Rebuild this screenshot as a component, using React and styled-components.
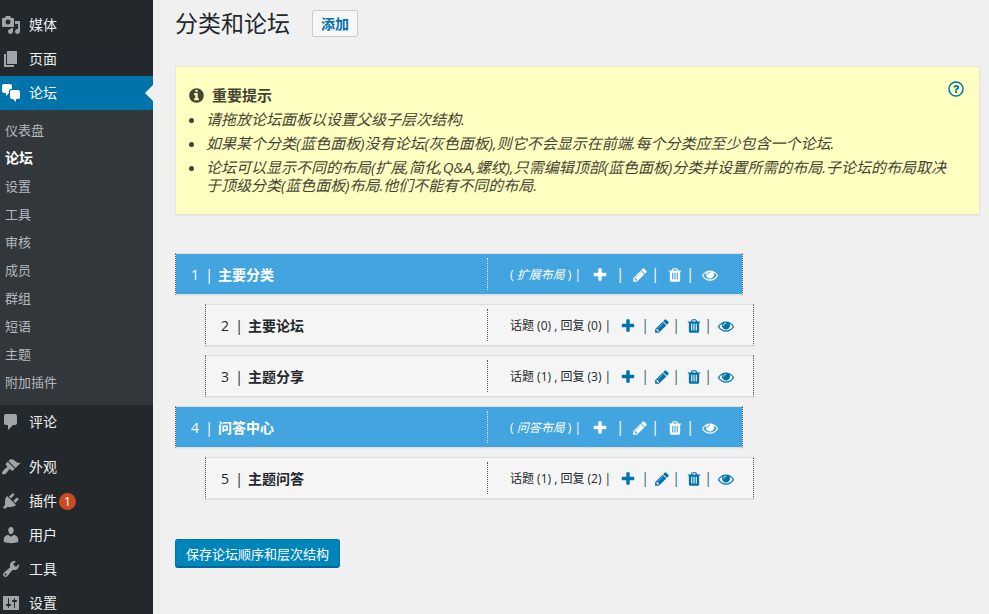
import React from "react";
import styled, { createGlobalStyle, css } from "styled-components";

const GlobalStyle = createGlobalStyle`
  * { box-sizing: border-box; }
  body {
    margin: 0;
    background: #f0f0f0;
    color: #23282d;
    font-family: "Open Sans", "Noto Sans CJK SC", sans-serif;
    font-size: 14px;
  }
  button { font-family: inherit; cursor: pointer; }
  h1, h2, ul, p { margin: 0; padding: 0; }
`;

/* ---------- icons ---------- */

const Svg = styled.svg`
  display: block;
  flex: none;
  width: ${(p) => p.$size}px;
  height: ${(p) => p.$size}px;
  fill: currentColor;
`;

const menuPaths = {
  media:
    "M13 11V4c0-.55-.45-1-1-1h-1.67L9 1H5L3.67 3H2c-.55 0-1 .45-1 1v7c0 .55.45 1 1 1h10c.55 0 1-.45 1-1zM7 4.5c1.38 0 2.5 1.12 2.5 2.5S8.38 9.5 7 9.5 4.5 8.38 4.5 7 5.62 4.5 7 4.5zM14 6h5v10.5c0 1.38-1.12 2.5-2.5 2.5S14 17.88 14 16.5s1.12-2.5 2.5-2.5c.17 0 .34.02.5.05V9h-3V6zm-4 8.05V13h2v3.5c0 1.38-1.12 2.5-2.5 2.5S7 17.88 7 16.5 8.12 14 9.5 14c.17 0 .34.02.5.05z",
  page: "M6 15V2h10v13H6zm-1 1h8v2H3V5h2v11z",
  chat: "M11 6h-.82C9.07 6 8 7.2 8 8.16V10l-3 3v-3H3c-1.1 0-2-.9-2-2V3c0-1.1.9-2 2-2h6c1.1 0 2 .9 2 2v3zm0 1h6c1.1 0 2 .9 2 2v5c0 1.1-.9 2-2 2h-2v3l-3-3h-1c-1.1 0-2-.9-2-2V9c0-1.1.9-2 2-2z",
  comment:
    "M5 2h9c1.1 0 2 .9 2 2v7c0 1.1-.9 2-2 2h-2l-5 5v-5H5c-1.1 0-2-.9-2-2V4c0-1.1.9-2 2-2z",
  appearance:
    "M14.48 11.06L7.41 3.99l1.5-1.5c.5-.56 2.3-.47 3.51.32 1.21.8 1.43 1.28 2.91 2.1 1.18.64 2.45 1.26 4.45.85zm-.71.71L6.7 4.7 4.93 6.47c-.39.39-.39 1.02 0 1.41l1.06 1.06c.39.39.39 1.03 0 1.42-.6.6-1.43 1.11-2.21 1.69-.35.26-.7.53-1.01.84C1.43 14.23.4 16.08 1.4 17.07c.99 1 2.84-.03 4.18-1.36.31-.31.58-.66.85-1.02.57-.78 1.08-1.61 1.69-2.21.39-.39 1.02-.39 1.41 0l1.06 1.06c.39.39 1.02.39 1.41 0z",
  plugins:
    "M13.11 4.36L9.87 7.6 8 5.73l3.24-3.24c.35-.34 1.05-.2 1.56.32.52.51.66 1.21.31 1.55zm-8 1.77l.91-1.12 9.01 9.01-1.19.84c-.71.71-2.63 1.16-3.82 1.16H6.14L4.9 17.26c-.59.59-1.54.59-2.12 0-.59-.58-.59-1.53 0-2.12l1.24-1.24v-3.88c0-1.13.4-3.19 1.09-3.89zm7.26 3.97l3.24-3.24c.34-.35 1.04-.21 1.55.31.52.51.66 1.21.31 1.55l-3.24 3.25z",
  users:
    "M10 9.25c-2.27 0-2.73-3.44-2.73-3.44C7 4.02 7.82 2 9.97 2c2.16 0 2.98 2.02 2.71 3.81 0 0-.41 3.44-2.68 3.44zm0 2.57L12.72 10c2.39 0 4.52 2.33 4.52 4.53v2.49s-3.65 1.13-7.24 1.13c-3.65 0-7.24-1.13-7.24-1.13v-2.49c0-2.25 1.94-4.48 4.47-4.48z",
  tools:
    "M16.68 9.77c-1.34 1.34-3.3 1.67-4.95.99l-5.41 6.52c-.99.99-2.59.99-3.58 0s-.99-2.59 0-3.57l6.52-5.42c-.68-1.65-.35-3.61.99-4.95 1.28-1.28 3.12-1.62 4.72-1.06l-2.89 2.89 2.82 2.82 2.86-2.87c.53 1.58.18 3.39-1.08 4.65zM3.81 16.21c.4.39 1.04.39 1.43 0 .4-.4.4-1.04 0-1.43-.39-.4-1.03-.4-1.43 0-.39.39-.39 1.03 0 1.43z",
  settings:
    "M18 16V4c0-.55-.45-1-1-1H3c-.55 0-1 .45-1 1v12c0 .55.45 1 1 1h14c.55 0 1-.45 1-1zM8 11h1c.55 0 1 .45 1 1s-.45 1-1 1H8v1.5c0 .28-.22.5-.5.5s-.5-.22-.5-.5V13H6c-.55 0-1-.45-1-1s.45-1 1-1h1V5.5c0-.28.22-.5.5-.5s.5.22.5.5V11zm5-2h-1c-.55 0-1-.45-1-1s.45-1 1-1h1V5.5c0-.28.22-.5.5-.5s.5.22.5.5V7h1c.55 0 1 .45 1 1s-.45 1-1 1h-1v5.5c0 .28-.22.5-.5.5s-.5-.22-.5-.5V9z",
};

const actionPaths = {
  plus: "M1600 736v192q0 40-28 68t-68 28h-416v416q0 40-28 68t-68 28h-192q-40 0-68-28t-28-68v-416h-416q-40 0-68-28t-28-68v-192q0-40 28-68t68-28h416v-416q0-40 28-68t68-28h192q40 0 68 28t28 68v416h416q40 0 68 28t28 68z",
  pencil:
    "M491 1536l91-91-235-235-91 91v107h128v128h107zm523-928q0-22-22-22-10 0-17 7l-542 542q-7 7-7 17 0 22 22 22 10 0 17-7l542-542q7-7 7-17zm-54-192l416 416-832 832h-416v-416zm683 96q0 53-37 90l-166 166-416-416 166-165q36-38 90-38 53 0 91 38l235 234q37 39 37 91z",
  trash:
    "M704 1376v-704q0-14-9-23t-23-9h-64q-14 0-23 9t-9 23v704q0 14 9 23t23 9h64q14 0 23-9t9-23zm256 0v-704q0-14-9-23t-23-9h-64q-14 0-23 9t-9 23v704q0 14 9 23t23 9h64q14 0 23-9t9-23zm256 0v-704q0-14-9-23t-23-9h-64q-14 0-23 9t-9 23v704q0 14 9 23t23 9h64q14 0 23-9t9-23zm-544-992h448l-48-117q-7-9-17-11h-317q-10 2-17 11zm928 32v64q0 14-9 23t-23 9h-96v948q0 83-47 143.5t-113 60.5h-832q-66 0-113-58.5t-47-141.5v-952h-96q-14 0-23-9t-9-23v-64q0-14 9-23t23-9h309l70-167q15-37 54-63t79-26h320q40 0 79 26t54 63l70 167h309q14 0 23 9t9 23z",
  eye: "M1664 960q-152-236-381-353 61 104 61 225 0 185-131.5 316.5t-316.5 131.5-316.5-131.5-131.5-316.5q0-121 61-225-229 117-381 353 133 205 333.5 326.5t434.5 121.5 434.5-121.5 333.5-326.5zm-720-384q0-20-14-34t-34-14q-125 0-214.5 89.5t-89.5 214.5q0 20 14 34t34 14 34-14 14-34q0-86 61-147t147-61q20 0 34-14t14-34zm848 384q0 34-20 69-140 230-376.5 368.5t-499.5 138.5-499.5-139-376.5-368q-20-35-20-69t20-69q140-229 376.5-368t499.5-139 499.5 139 376.5 368q20 35 20 69z",
  info: "M1152 1376v-160q0-14-9-23t-23-9h-96v-512q0-14-9-23t-23-9h-320q-14 0-23 9t-9 23v160q0 14 9 23t23 9h96v320h-96q-14 0-23 9t-9 23v160q0 14 9 23t23 9h448q14 0 23-9t9-23zm-128-896v-160q0-14-9-23t-23-9h-192q-14 0-23 9t-9 23v160q0 14 9 23t23 9h192q14 0 23-9t9-23zm640 416q0 209-103 385.5t-279.5 279.5-385.5 103-385.5-103-279.5-279.5-103-385.5 103-385.5 279.5-279.5 385.5-103 385.5 103 279.5 279.5 103 385.5z",
};

const MenuIcon = ({ name }) => (
  <Svg $size={20} viewBox="0 0 20 20" aria-hidden="true">
    <path d={menuPaths[name]} />
  </Svg>
);

const ActionIcon = ({ name, size = 16 }) => (
  <Svg $size={size} viewBox="0 0 1792 1792" aria-hidden="true">
    <path d={actionPaths[name]} />
  </Svg>
);

const HelpIcon = () => (
  <Svg $size={18} viewBox="0 0 1792 1792" aria-hidden="true">
    <circle cx="896" cy="896" r="700" fill="none" stroke="currentColor" strokeWidth="150" />
    <g transform="translate(331 340) scale(.62)">
      <path d="M1088 1256v240q0 16-12 28t-28 12h-240q-16 0-28-12t-12-28v-240q0-16 12-28t28-12h240q16 0 28 12t12 28zm316-600q0 54-15.5 101t-35 76.5-55 59.5-57.5 43.5-61 35.5q-41 23-68.5 65t-27.5 67q0 17-12 32.5t-28 15.5h-240q-15 0-25.5-18.5t-10.5-37.5v-45q0-83 65-156.5t143-108.5q59-27 84-56t25-76q0-42-46.5-74t-107.5-32q-65 0-108 29-35 25-107 115-13 16-31 16-12 0-25-8l-164-125q-13-10-15.5-25t5.5-28q160-266 464-266 80 0 161 31t146 83 106 127.5 41 158.5z" />
    </g>
  </Svg>
);

/* ---------- sidebar ---------- */

const Shell = styled.div`
  display: flex;
  height: 100vh;
  overflow: hidden;
`;

const Sidebar = styled.nav`
  flex: 0 0 153px;
  padding-top: 8px;
  background: #23282d;
  overflow: hidden;
`;

const MenuGroup = styled.ul`
  list-style: none;
  & + & { margin-top: 11px; }
`;

const MenuLink = styled.a`
  position: relative;
  display: flex;
  align-items: center;
  height: 34px;
  padding-left: 1px;
  color: ${(p) => (p.$active ? "#fff" : "#a0a5aa")};
  background: ${(p) => (p.$active ? "#0073aa" : "transparent")};
  text-decoration: none;
  ${(p) =>
    p.$active &&
    css`
      &::after {
        content: "";
        position: absolute;
        right: 0;
        top: 9px;
        border: 8px solid transparent;
        border-left: 0;
        border-right-color: #f0f0f0;
      }
    `}
`;

const MenuLabel = styled.span`
  margin-left: 8px;
  color: ${(p) => (p.$active ? "#fff" : "#eee")};
  font-size: 14px;
  line-height: 18px;
`;

const CountBadge = styled.span`
  width: 17px;
  height: 17px;
  margin-left: 2px;
  border-radius: 9px;
  background: #ca4a1f;
  color: #fff;
  font-size: 12px;
  line-height: 17px;
  text-align: center;
`;

const SubMenu = styled.ul`
  list-style: none;
  padding: 6px 0 9px;
  background: #32373c;
`;

const SubLink = styled.a`
  display: block;
  padding-left: 5px;
  color: ${(p) => (p.$current ? "#fff" : "#b4b9be")};
  font-size: ${(p) => (p.$current ? 14 : 13)}px;
  font-weight: ${(p) => (p.$current ? 700 : 400)};
  line-height: 28px;
  text-decoration: none;
`;

/* ---------- main area ---------- */

const Main = styled.main`
  flex: 1;
  min-width: 0;
  padding: 10px 9px 0 22px;
`;

const PageHeader = styled.header`
  display: flex;
  align-items: center;
  gap: 22px;
`;

const PageTitle = styled.h1`
  font-size: 23px;
  font-weight: 400;
  line-height: 27px;
`;

const AddButton = styled.button`
  height: 27px;
  padding: 0 8px;
  border: 1px solid #ccc;
  border-radius: 2px;
  background: #f7f7f7;
  color: #0073aa;
  font-size: 14px;
  font-weight: 700;
  line-height: 24px;
`;

const Notice = styled.section`
  margin-top: 29px;
  padding: 13px 14px 20px 12px;
  border: 1px solid #e5e5d8;
  background: #ffffc2;
  box-shadow: 0 1px 1px rgba(0, 0, 0, 0.04);
  color: #444433;
`;

const NoticeHead = styled.div`
  display: flex;
  align-items: flex-start;
  justify-content: space-between;
`;

const NoticeTitle = styled.h2`
  display: flex;
  align-items: center;
  gap: 7px;
  padding-top: 3px;
  font-size: 15px;
  font-weight: 600;
  line-height: 24px;
`;

const NoticeList = styled.ul`
  margin-top: 3px;
  padding: 0 12px 0 18px;
  font-size: 15px;
  line-height: 18px;
`;

const NoticeItem = styled.li`
  font-style: italic;
  & + & { margin-top: 6px; }
`;

const HelpButton = styled.button`
  display: block;
  padding: 0;
  border: 0;
  background: none;
  color: #0073aa;
`;

const ForumList = styled.ul`
  display: grid;
  gap: 9px;
  max-width: 579px;
  margin-top: 38px;
  list-style: none;
`;

const ForumRow = styled.li`
  display: flex;
  align-items: center;
  height: 42px;
  margin: ${(p) => (p.$category ? "0 11px 0 0" : "0 0 0 30px")};
  border: 1px solid #dedede;
  border-left: 1px dotted #555;
  border-right: 1px dotted #555;
  background: ${(p) => (p.$category ? "#43a5df" : "#f5f5f5")};
  background-clip: padding-box;
  box-shadow: 0 1px 1px rgba(0, 0, 0, 0.04);
  color: ${(p) => (p.$category ? "#fff" : "#23282d")};
`;

const ForumName = styled.div`
  display: flex;
  flex: 1;
  align-items: center;
  height: 32px;
  padding-left: 15px;
  border-right: 1px dotted ${(p) => (p.$category ? "#fff" : "#555")};
  font-size: 14px;
`;

const ForumId = styled.span`
  width: 14px;
`;

const NameBar = styled.span`
  width: 8px;
  margin-right: 5px;
  text-align: center;
`;

const ForumTitle = styled.strong`
  font-weight: 700;
`;

const Actions = styled.div`
  display: flex;
  flex: 0 0 ${(p) => (p.$category ? 254 : 265)}px;
  align-items: center;
  padding-left: 22px;
`;

const Meta = styled.span`
  width: ${(p) => (p.$category ? 82 : 110)}px;
  padding-top: 2px;
  font-size: 12px;
  line-height: 18px;
  white-space: pre;
`;

const IconButton = styled.button`
  display: block;
  padding: 2px 0 0;
  border: 0;
  background: none;
  color: ${(p) => (p.$category ? "#fff" : "#0073aa")};
`;

const Bar = styled.span`
  width: 8px;
  margin: 0 ${(p) => (p.$category ? "8px 0 3px" : "6px 0 2px")};
  padding-bottom: 2px;
  color: ${(p) => (p.$category ? "#fff" : "#3b6f80")};
  font-size: 15px;
  line-height: 18px;
  text-align: center;

  &:nth-of-type(2) {
    margin: 0 ${(p) => (p.$category ? "8px" : "5px")};
  }
`;

const SaveButton = styled.button`
  height: 29px;
  margin-top: 40px;
  padding: 0 10px;
  border: 1px solid #0073aa;
  border-bottom-color: #006799;
  border-radius: 3px;
  background: #0085ba;
  box-shadow: inset 0 -1px 0 #006799;
  color: #fff;
  font-size: 13px;
  line-height: 26px;
`;

/* ---------- data ---------- */

const subItems = ["仪表盘", "论坛", "设置", "工具", "审核", "成员", "群组", "短语", "主题", "附加插件"];

const menuGroups = [
  [
    { icon: "media", label: "媒体" },
    { icon: "page", label: "页面" },
    { icon: "chat", label: "论坛", active: true, children: subItems },
    { icon: "comment", label: "评论" },
  ],
  [
    { icon: "appearance", label: "外观" },
    { icon: "plugins", label: "插件", count: 1 },
    { icon: "users", label: "用户" },
    { icon: "tools", label: "工具" },
    { icon: "settings", label: "设置" },
  ],
];

const tips = [
  "请拖放论坛面板以设置父级子层次结构.",
  "如果某个分类(蓝色面板)没有论坛(灰色面板),则它不会显示在前端.每个分类应至少包含一个论坛.",
  "论坛可以显示不同的布局(扩展,简化,Q&A,螺纹),只需编辑顶部(蓝色面板)分类并设置所需的布局.子论坛的布局取决于顶级分类(蓝色面板)布局.他们不能有不同的布局.",
];

const forums = [
  { id: 1, title: "主要分类", layout: "扩展布局" },
  { id: 2, title: "主要论坛", topics: 0, replies: 0 },
  { id: 3, title: "主题分享", topics: 1, replies: 3 },
  { id: 4, title: "问答中心", layout: "问答布局" },
  { id: 5, title: "主题问答", topics: 1, replies: 2 },
];

const actions = [
  { icon: "plus", label: "添加" },
  { icon: "pencil", label: "编辑" },
  { icon: "trash", label: "删除" },
  { icon: "eye", label: "查看" },
];

const Forum = ({ forum }) => {
  const category = Boolean(forum.layout);
  return (
    <ForumRow $category={category}>
      <ForumName $category={category}>
        <ForumId>{forum.id}</ForumId>
        <NameBar>|</NameBar>
        <ForumTitle>{forum.title}</ForumTitle>
      </ForumName>
      <Actions $category={category}>
        <Meta $category={category}>
          {category ? (
            <>
              {"( "}
              <em>{forum.layout}</em>
              {" ) |"}
            </>
          ) : (
            `话题 (${forum.topics}) , 回复 (${forum.replies}) |`
          )}
        </Meta>
        {actions.map((a, i) => (
          <React.Fragment key={a.icon}>
            {i > 0 && <Bar $category={category}>|</Bar>}
            <IconButton type="button" aria-label={a.label} $category={category}>
              <ActionIcon name={a.icon} />
            </IconButton>
          </React.Fragment>
        ))}
      </Actions>
    </ForumRow>
  );
};

export default function App() {
  return (
    <Shell>
      <GlobalStyle />
      <Sidebar>
        {menuGroups.map((group, g) => (
          <MenuGroup key={g}>
            {group.map((item) => (
              <li key={item.label}>
                <MenuLink href="#" $active={item.active}>
                  <MenuIcon name={item.icon} />
                  <MenuLabel $active={item.active}>{item.label}</MenuLabel>
                  {item.count && <CountBadge>{item.count}</CountBadge>}
                </MenuLink>
                {item.children && (
                  <SubMenu>
                    {item.children.map((label) => (
                      <li key={label}>
                        <SubLink href="#" $current={label === "论坛"}>
                          {label}
                        </SubLink>
                      </li>
                    ))}
                  </SubMenu>
                )}
              </li>
            ))}
          </MenuGroup>
        ))}
      </Sidebar>
      <Main>
        <PageHeader>
          <PageTitle>分类和论坛</PageTitle>
          <AddButton type="button">添加</AddButton>
        </PageHeader>
        <Notice>
          <NoticeHead>
            <NoticeTitle>
              <ActionIcon name="info" size={17} />
              重要提示
            </NoticeTitle>
            <HelpButton type="button" aria-label="帮助">
              <HelpIcon />
            </HelpButton>
          </NoticeHead>
          <NoticeList>
            {tips.map((tip) => (
              <NoticeItem key={tip}>{tip}</NoticeItem>
            ))}
          </NoticeList>
        </Notice>
        <ForumList>
          {forums.map((forum) => (
            <Forum key={forum.id} forum={forum} />
          ))}
        </ForumList>
        <SaveButton type="button">保存论坛顺序和层次结构</SaveButton>
      </Main>
    </Shell>
  );
}
